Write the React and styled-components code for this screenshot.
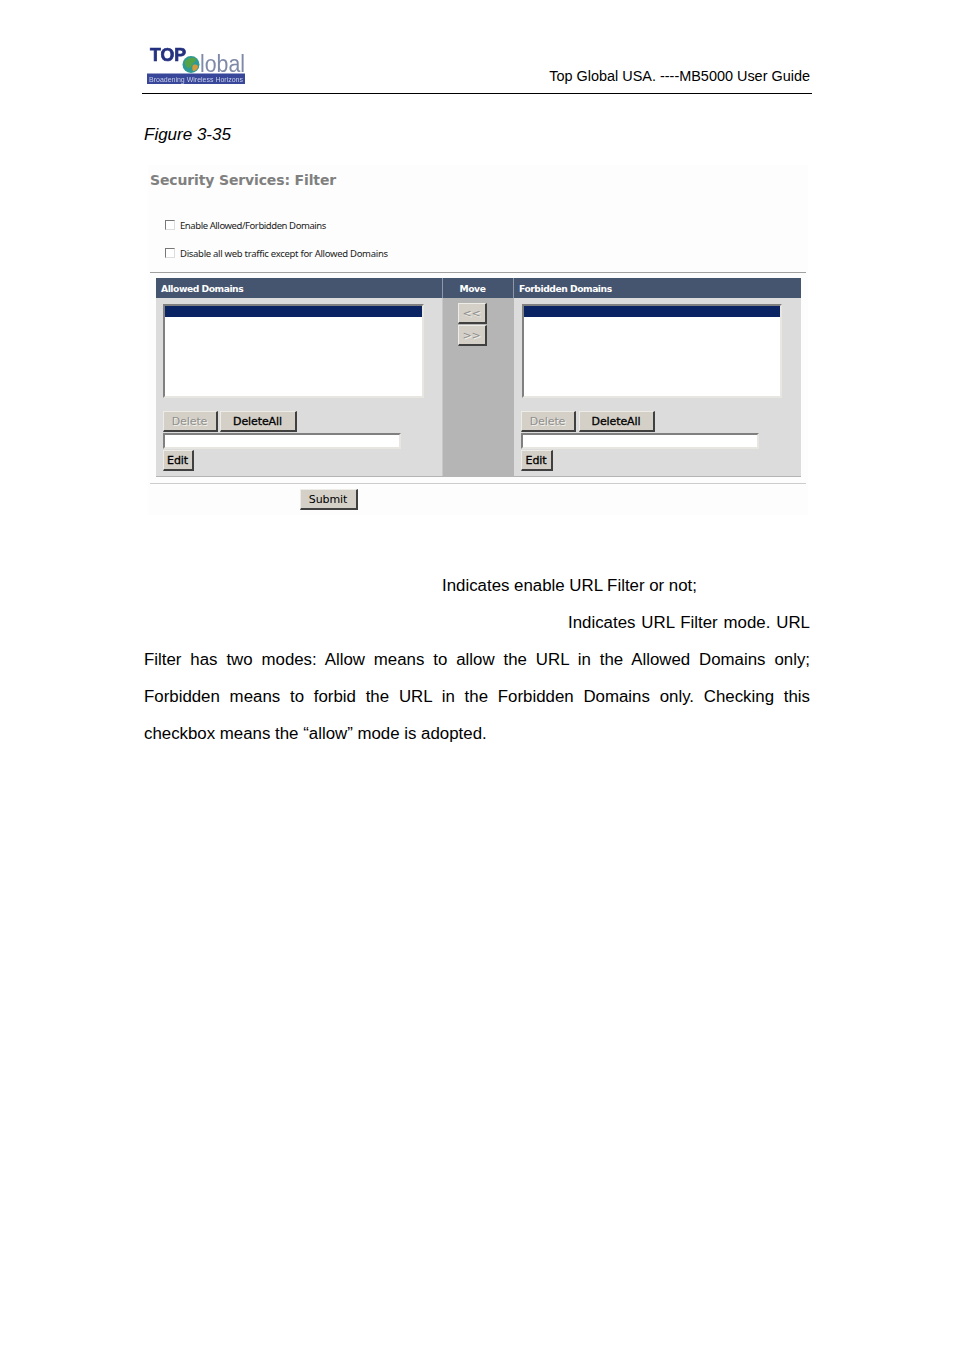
import React from "react";
import styled, { createGlobalStyle } from "styled-components";

const Global = createGlobalStyle`
  html, body { margin: 0; padding: 0; background: #fff; }
  body { font-family: "Liberation Sans", Arial, sans-serif; color: #000; }
`;

const Page = styled.div`
  width: 954px;
  height: 1350px;
  box-sizing: border-box;
  padding: 44px 142px 0;
  overflow: hidden;
`;
const Header = styled.header`
  height: 49px;
  border-bottom: 1px solid #000;
  display: flex;
  justify-content: space-between;
  align-items: flex-start;
`;
const GuideTitle = styled.div`
  font-size: 14.45px;
  line-height: 17px;
  margin: 24px 2px 0 0;
`;
const Caption = styled.div`
  font-style: italic;
  font-size: 17px;
  line-height: 20px;
  margin: 31px 0 0 2px;
`;
const Shot = styled.section`
  margin: 20px -4px 0 6px;
  width: 660px;
  height: 350px;
  background: #fdfdfd;
  padding-top: 7px;
  box-sizing: border-box;
`;
const PanelTitle = styled.h2`
  margin: 0 0 0 2px;
  font: bold 14px/17px "DejaVu Sans", sans-serif;
  letter-spacing: -0.14px;
  color: #808080;
`;
const OptionRow = styled.div`
  display: flex;
  align-items: center;
  gap: 5px;
  height: 14px;
  margin: ${(p) => p.$top}px 0 0 17px;
  font: 9.5px/14px "Noto Sans", sans-serif;
  letter-spacing: ${(p) => p.$track}px;
  color: #222;
`;
const Check = styled.span`
  width: 8px;
  height: 8px;
  background: #fff;
  border: 1px solid;
  border-color: #777 #ddd #ddd #777;
  margin-top: -2px;
`;
const Rule = styled.div`
  height: 1px;
  margin: ${(p) => p.$top}px 2px 0 2px;
  width: 656px;
  background: ${(p) => p.$color};
`;
const Grid = styled.div`
  display: grid;
  grid-template-columns: 286px 72px 287px;
  grid-template-rows: 20px 178px;
  margin: 5px 0 0 8px;
  width: 645px;
  height: 199px;
  background: #dcdcdc;
  border-bottom: 1px solid #b4b4b4;
  box-sizing: border-box;
`;
const HeadCell = styled.div`
  background: #45546f;
  color: #fff;
  font: bold 9.2px/21px "DejaVu Sans", sans-serif;
  letter-spacing: -0.46px;
  padding: ${(p) => (p.$center ? "0 11px 0 0" : "0 0 0 5px")};
  text-align: ${(p) => (p.$center ? "center" : "left")};
  border-left: ${(p) => (p.$center ? "1px solid #8d97a9" : "0")};
  border-right: ${(p) => (p.$center ? "1px solid #8d97a9" : "0")};
`;
const Pane = styled.div`
  padding: 6px 0 0 7px;
  display: flex;
  flex-direction: column;
  align-items: flex-start;
`;
const MovePane = styled.div`
  background: #b5b5b5;
  border-left: 1px solid #c8c8c8;
  display: flex;
  flex-direction: column;
  align-items: flex-start;
  gap: 1px;
  padding: 5px 0 0 15px;
  box-sizing: border-box;
`;
const ListBox = styled.div`
  width: ${(p) => (p.$nudge ? 260 : 261)}px;
  height: 94px;
  margin-left: ${(p) => (p.$nudge ? 1 : 0)}px;
  box-sizing: border-box;
  background: #fff;
  border: 2px solid;
  border-color: #808080 #e8e6e0 #e8e6e0 #808080;
`;
const SelectedRow = styled.div`
  height: 11px;
  background: #0a2463;
`;
const ButtonRow = styled.div`
  display: flex;
  gap: ${(p) => (p.$wide ? 3 : 2)}px;
  margin-top: 13px;
`;
const Btn = styled.button`
  display: block;
  width: ${(p) => p.$w}px;
  height: 21px;
  box-sizing: border-box;
  padding: 2px 1px 0 0;
  background: #d4d0c8;
  border: 1px solid;
  border-color: #eeece6 #404040 #404040 #eeece6;
  border-bottom-width: 2px;
  border-right-width: 2px;
  font: normal 11px/16px "DejaVu Sans", sans-serif;
  letter-spacing: -0.1px;
  color: ${(p) => (p.$off ? "#8f8f8f" : "#000")};
  text-shadow: ${(p) => (p.$off ? "1px 1px 0 #f2f0ea" : "none")};
  -webkit-text-stroke: ${(p) => (p.$heavy ? "0.3px #000" : "0")};
`;
const TextBox = styled.div`
  width: 238px;
  height: 16px;
  margin: 1px 0;
  box-sizing: border-box;
  background: #fff;
  border: 2px solid;
  border-color: #808080 #e8e6e0 #e8e6e0 #808080;
`;
const SubmitWrap = styled.div`
  margin: 5px 0 0 152px;
`;
const Body = styled.div`
  margin: 52px 0 0 2px;
  width: 666px;
  font-size: 16.85px;
  line-height: 37px;
`;
const Line = styled.div`
  text-align: justify;
  text-align-last: ${(p) => (p.$last ? "left" : "justify")};
  padding-left: ${(p) => p.$indent || 0}px;
  white-space: nowrap;
`;

const Logo = () => (
  <svg width="112" height="44" viewBox="0 0 112 44" style={{ marginLeft: 3 }}>
    <defs>
      <filter id="soft"><feGaussianBlur stdDeviation="0.5" /></filter>
    </defs>
    <g filter="url(#soft)">
      <text x="5" y="16.5" fontFamily="Liberation Sans" fontWeight="bold" fontSize="18" fill="#25307f" stroke="#25307f" strokeWidth="0.7" textLength="36" lengthAdjust="spacingAndGlyphs">TOP</text>
      <circle cx="46" cy="20.5" r="8.5" fill="#2f9a93" />
      <path d="M40 17c3-3 7-4 10-3 2 2 0 4-2 5-1 3-3 5-5 5-2-2-4-4-3-7z" fill="#55a34a" />
      <path d="M48 21c3-1 5 0 5 2-1 3-3 4-5 4-1-2-1-4 0-6z" fill="#d69a3a" />
      <text x="55" y="28" fontFamily="Liberation Sans" fontSize="23" fill="#7f8aa8" textLength="45" lengthAdjust="spacingAndGlyphs">lobal</text>
      <rect x="2" y="29.5" width="98" height="10.5" fill="#38479a" />
      <text x="4" y="37.5" fontFamily="Liberation Sans" fontSize="7.4" fill="#c8cde8" textLength="94" lengthAdjust="spacingAndGlyphs">Broadening Wireless Horizons</text>
    </g>
  </svg>
);

const DomainPane = ({ nudge }) => (
  <Pane>
    <ListBox $nudge={nudge}>
      <SelectedRow />
    </ListBox>
    <ButtonRow $wide={nudge}>
      <Btn $w={55} $off>Delete</Btn>
      <Btn $w={nudge ? 76 : 77} $heavy>DeleteAll</Btn>
    </ButtonRow>
    <TextBox />
    <Btn $w={nudge ? 32 : 31} $heavy>Edit</Btn>
  </Pane>
);

export default function App() {
  return (
    <Page>
      <Global />
      <Header>
        <Logo />
        <GuideTitle>Top Global USA. ----MB5000 User Guide</GuideTitle>
      </Header>
      <Caption>Figure 3-35</Caption>
      <Shot>
        <PanelTitle>Security Services: Filter</PanelTitle>
        <OptionRow $top={30} $track={-0.42}><Check />Enable Allowed/Forbidden Domains</OptionRow>
        <OptionRow $top={14} $track={-0.29}><Check />Disable all web traffic except for Allowed Domains</OptionRow>
        <Rule $top={11} $color="#a0a0a0" />
        <Grid>
          <HeadCell>Allowed Domains</HeadCell>
          <HeadCell $center>Move</HeadCell>
          <HeadCell>Forbidden Domains</HeadCell>
          <DomainPane />
          <MovePane>
            <Btn $w={29} $off>&lt;&lt;</Btn>
            <Btn $w={29} $off>&gt;&gt;</Btn>
          </MovePane>
          <DomainPane nudge />
        </Grid>
        <Rule $top={6} $color="#cccccc" />
        <SubmitWrap><Btn $w={58}>Submit</Btn></SubmitWrap>
      </Shot>
      <Body>
        <Line $indent={298} $last>Indicates enable URL Filter or not;</Line>
        <Line $indent={424}>Indicates URL Filter mode. URL</Line>
        <Line>Filter has two modes: Allow means to allow the URL in the Allowed Domains only;</Line>
        <Line>Forbidden means to forbid the URL in the Forbidden Domains only. Checking this</Line>
        <Line $last>checkbox means the “allow” mode is adopted.</Line>
      </Body>
    </Page>
  );
}
